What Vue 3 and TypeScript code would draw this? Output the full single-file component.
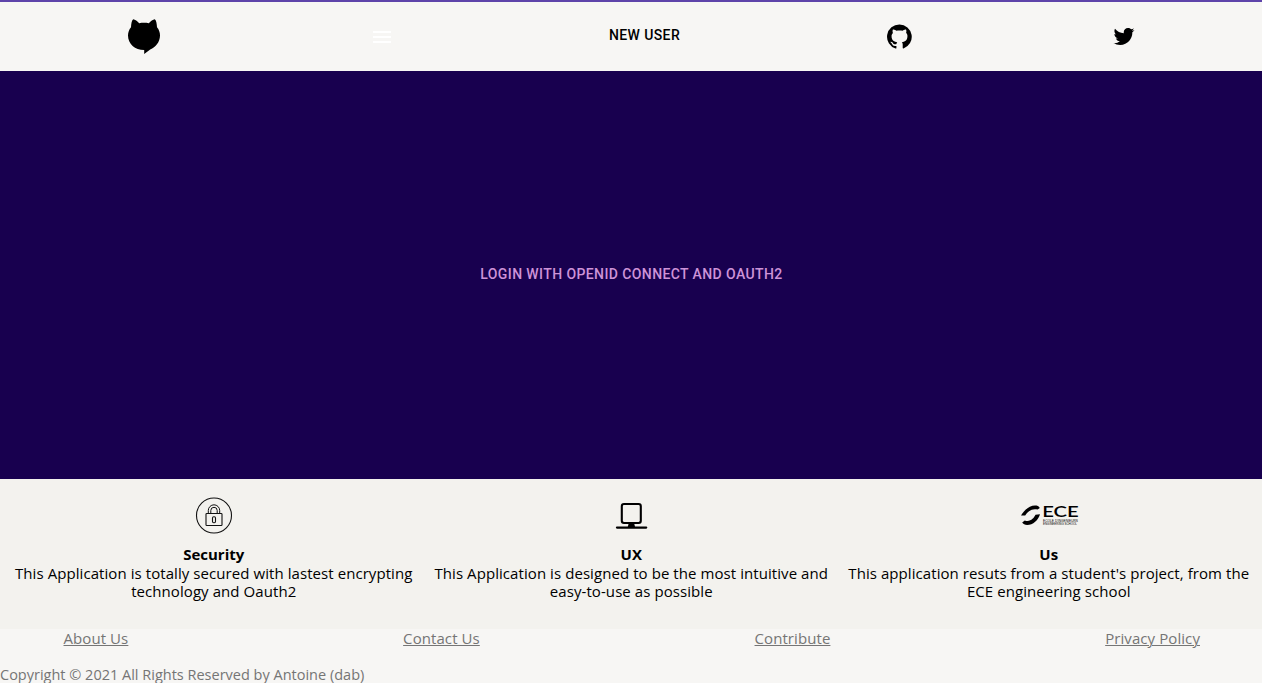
<script setup lang="ts">
interface Feature {
  icon: 'lock' | 'laptop' | 'school'
  title: string
  lines: [string, string]
}

const features: Feature[] = [
  {
    icon: 'lock',
    title: 'Security',
    lines: ['This Application is totally secured with lastest encrypting', 'technology and Oauth2'],
  },
  {
    icon: 'laptop',
    title: 'UX',
    lines: ['This Application is designed to be the most intuitive and', 'easy-to-use as possible'],
  },
  {
    icon: 'school',
    title: 'Us',
    lines: ["This application resuts from a student's project, from the", 'ECE engineering school'],
  },
]

const links: string[] = ['About Us', 'Contact Us', 'Contribute', 'Privacy Policy']
</script>

<template>
  <div class="page">
    <header class="bar">
      <svg class="logo" viewBox="0 0 34 36" aria-label="Home">
        <path
          d="M4 9.2C4.2 6 4.6 2.4 6.2 1.2C8.2 1.4 10.2 3.2 12.2 5.2C15.2 4.7 18.8 4.7 21.8 5.2C23.8 3.2 25.8 1.4 27.8 1.2C29.4 2.4 29.8 6 30 9.2C32 11.6 33 14.4 33 17.5C33 24 28.6 29 23.2 31.6L17.2 36V32.1C8 32.1 1 26 1 17.5C1 14.4 2 11.6 4 9.2Z"
        />
      </svg>
      <button class="icon-button" aria-label="Menu">
        <svg class="menu" viewBox="0 0 24 24"><path d="M3 18h18v-2H3v2zm0-5h18v-2H3v2zm0-7v2h18V6H3z" /></svg>
      </button>
      <button class="text-button">NEW USER</button>
      <svg class="github" viewBox="0 0 24 24" aria-label="GitHub">
        <path
          d="M12 1.27a11 11 0 00-3.48 21.46c.55.09.73-.28.73-.55v-1.84c-3.03.64-3.67-1.46-3.67-1.46-.55-1.29-1.28-1.65-1.28-1.65-.92-.65.1-.65.1-.65 1.1 0 1.73 1.1 1.73 1.1.92 1.65 2.57 1.2 3.21.92a2 2 0 01.64-1.47c-2.47-.27-5.04-1.19-5.04-5.5 0-1.1.46-2.1 1.2-2.84a3.76 3.76 0 010-2.93s.91-.28 3.11 1.1c1.8-.49 3.7-.49 5.5 0 2.1-1.38 3.02-1.1 3.02-1.1a3.76 3.76 0 01.1 2.83c.74.74 1.2 1.74 1.2 2.94 0 4.21-2.57 5.13-5.04 5.4.45.37.82.92.82 2.02v3.03c0 .27.1.64.73.55A11 11 0 0012 1.27"
        />
      </svg>
      <svg class="twitter" viewBox="0 0 24 24" aria-label="Twitter">
        <path
          d="M22.46 6c-.77.35-1.6.58-2.46.69.88-.53 1.56-1.37 1.88-2.38-.83.5-1.75.85-2.72 1.05C18.37 4.5 17.26 4 16 4c-2.35 0-4.27 1.92-4.27 4.29 0 .34.04.67.11.98C8.28 9.09 5.11 7.38 3 4.79c-.37.63-.58 1.37-.58 2.15 0 1.49.75 2.81 1.91 3.56-.71 0-1.37-.2-1.95-.5v.03c0 2.08 1.48 3.82 3.44 4.21a4.22 4.22 0 0 1-1.93.07 4.28 4.28 0 0 0 4 2.98 8.521 8.521 0 0 1-5.33 1.84c-.34 0-.68-.02-1.02-.06C3.44 20.29 5.7 21 8.12 21 16 21 20.33 14.46 20.33 8.79c0-.19 0-.37-.01-.56.84-.6 1.56-1.36 2.14-2.23z"
        />
      </svg>
    </header>

    <main class="hero">
      <button class="login">LOGIN WITH OPENID CONNECT AND OAUTH2</button>
    </main>

    <section class="features">
      <article v-for="feature in features" :key="feature.title" class="feature">
        <svg v-if="feature.icon === 'lock'" class="feature-icon" viewBox="0 0 60 40">
          <g fill="none" stroke="#111">
            <circle cx="30" cy="19.5" r="17.5" stroke-width="1.1" />
            <rect x="22" y="17.5" width="16" height="12" rx="0.8" stroke-width="1.1" />
            <path d="M24.3 17.5v-3a5.7 5.7 0 0 1 11.4 0v3M26.8 17.5v-3a3.2 3.2 0 0 1 6.4 0v3" stroke-width="1" />
            <rect x="28.5" y="20.8" width="3" height="6" rx="1.2" stroke-width="1.1" />
          </g>
        </svg>
        <svg v-else-if="feature.icon === 'laptop'" class="feature-icon" viewBox="0 0 60 40">
          <rect x="20.8" y="8" width="19" height="19" rx="2.2" fill="none" stroke="#000" stroke-width="2.1" />
          <path d="M27.6 27.4h5.6l.9 3.8h-7.4z" />
          <path d="M16 31.6h29.2" stroke="#000" stroke-width="2.3" stroke-linecap="round" />
        </svg>
        <svg v-else class="feature-icon" viewBox="0 0 60 40">
          <path d="M2 19.6C4.8 14.4 10.2 9.7 16 9.6C18.2 9.6 19.8 10.2 20.8 11.9L18.6 13.6C13 11.9 8.4 15.6 6.2 19.6Z" />
          <path d="M21 18.2C19.6 23.9 13.8 29 8.2 29C5.8 29 4.2 28.1 3.2 26.5L5.8 24.4C11.2 26.4 15 22 16.5 18.7Z" />
          <text class="ece-name" x="23.2" y="21" textLength="36.5" lengthAdjust="spacingAndGlyphs">ECE</text>
          <text class="ece-tag" x="24" y="25.8" textLength="35" lengthAdjust="spacingAndGlyphs">ECOLE D'INGENIEURS</text>
          <text class="ece-tag" x="24" y="29.4" textLength="34" lengthAdjust="spacingAndGlyphs">ENGINEERING SCHOOL</text>
        </svg>
        <h2 class="title">{{ feature.title }}</h2>
        <p class="description">{{ feature.lines[0] }}<br />{{ feature.lines[1] }}</p>
      </article>
    </section>

    <footer class="footer">
      <nav class="links">
        <a v-for="link in links" :key="link" class="link" href="#">{{ link }}</a>
      </nav>
      <p class="copyright">Copyright © 2021 All Rights Reserved by Antoine (dab)</p>
    </footer>
  </div>
</template>

<style>
body {
  margin: 0;
  overflow: hidden;
}
</style>

<style scoped>
.page {
  height: 683px;
  overflow: hidden;
  display: flex;
  flex-direction: column;
  background: #f7f6f4;
  color: #000;
  font-family: 'Segoe UI', 'Open Sans', 'Noto Sans', sans-serif;
  font-size: 15px;
}

button {
  padding: 0;
  border: 0;
  background: none;
  font: 500 14px/24px Roboto, sans-serif;
  letter-spacing: 0.4px;
}

.bar {
  flex: none;
  box-sizing: border-box;
  height: 71px;
  border-top: 2px solid #5e44aa;
  display: grid;
  grid-template-columns: 288px 188px 337px 173px 275px;
  align-items: center;
  justify-items: center;
}

.logo {
  width: 34px;
  height: 36px;
  margin-bottom: 2px;
}

.icon-button {
  display: flex;
}

.menu {
  width: 24px;
  height: 24px;
  fill: #fff;
}

.text-button {
  padding-bottom: 3px;
  color: #000;
}

.github {
  width: 27px;
  height: 27px;
  margin-bottom: 1px;
}

.twitter {
  width: 24px;
  height: 24px;
  margin-bottom: 2px;
}

.hero {
  flex: none;
  height: 408px;
  display: flex;
  align-items: center;
  justify-content: center;
  background: #18004f;
}

.login {
  padding: 0 0 2px 1px;
  color: #ce93d8;
}

.features {
  flex: none;
  box-sizing: border-box;
  height: 150px;
  padding: 17px 5px 0;
  display: grid;
  grid-template-columns: repeat(3, 417.5px);
  background: #f3f2ee;
}

.feature {
  display: flex;
  flex-direction: column;
  align-items: center;
  text-align: center;
}

.feature-icon {
  width: 60px;
  height: 40px;
  overflow: visible;
}

.ece-name {
  font: 600 15.5px Lato, sans-serif;
}

.ece-tag {
  font: 400 3.6px 'Liberation Sans', sans-serif;
}

.title {
  margin: 9px 0 0;
  font-size: 15px;
  font-weight: 700;
  line-height: 19px;
}

.description {
  margin: 0;
  line-height: 18px;
  letter-spacing: 0.07px;
  white-space: nowrap;
}

.footer {
  color: #757575;
}

.links {
  padding: 0 62px 0 63.5px;
  display: flex;
  justify-content: space-between;
  line-height: 19px;
  letter-spacing: 0.08px;
}

.link {
  color: inherit;
  text-underline-offset: 1px;
  text-decoration-thickness: 1px;
}

.copyright {
  margin: 17px 0 0;
  font-size: 14.5px;
  line-height: 19px;
}
</style>
